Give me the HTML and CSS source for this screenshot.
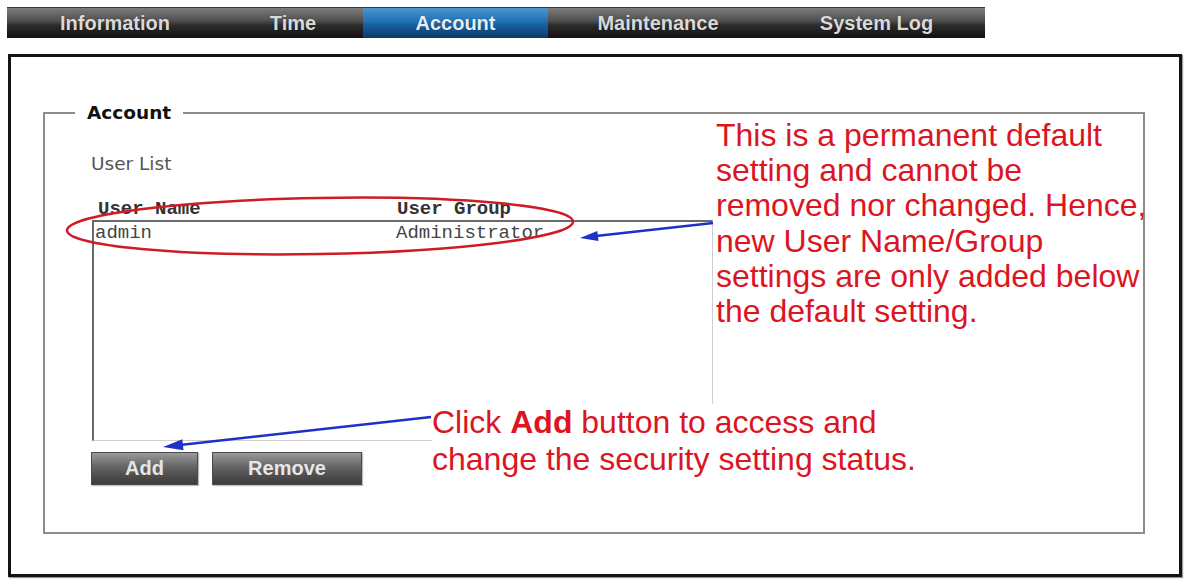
FILE: index.html
```html
<!DOCTYPE html>
<html lang="en">
<head>
<meta charset="utf-8">
<title>Account</title>
<link rel="stylesheet" href="styles.css">
</head>
<body>
<div class="page">
  <nav class="nav">
    <a class="tab tab-info">Information</a>
    <a class="tab tab-time">Time</a>
    <a class="tab tab-account active">Account</a>
    <a class="tab tab-maint">Maintenance</a>
    <a class="tab tab-log">System Log</a>
  </nav>

  <main class="box">
    <fieldset class="group">
      <legend class="group-title">Account</legend>
      <div class="label">User List</div>
      <div class="list-head">
        <span>User Name</span>
        <span>User Group</span>
      </div>
      <div class="listbox">
        <div class="row">
          <span>admin</span>
          <span>Administrator</span>
        </div>
      </div>
      <div class="actions">
        <button class="btn btn-add">Add</button>
        <button class="btn btn-remove">Remove</button>
      </div>
    </fieldset>
  </main>

  <p class="note note-default">This is a permanent default<br>setting and cannot be<br>removed nor changed. Hence,<br>new User Name/Group<br>settings are only added below<br>the default setting.</p>
  <p class="note note-add">Click <b>Add</b> button to access and<br>change the security setting status.</p>

  <svg class="marks" width="1184" height="581" viewBox="0 0 1184 581">
    <ellipse cx="320" cy="226" rx="253" ry="28" transform="rotate(-1 320 226)" fill="none" stroke="#cf1b24" stroke-width="2.5"/>
    <line x1="713" y1="223" x2="596" y2="236" stroke="#1f2fc8" stroke-width="2.5"/>
    <polygon points="580,238 598.5,240.9 597.3,231" fill="#1f2fc8"/>
    <line x1="431" y1="417" x2="180" y2="445" stroke="#1f2fc8" stroke-width="2.5"/>
    <polygon points="163,447 183.5,450.2 182.3,439.3" fill="#1f2fc8"/>
  </svg>
</div>
</body>
</html>
```

FILE: styles.css
```css
html, body {
  margin: 0;
  background: #fff;
}

.page {
  position: relative;
  width: 1184px;
  height: 581px;
  padding: 7px 0 0 7px;
  box-sizing: border-box;
  font-family: "DejaVu Sans", Verdana, sans-serif;
  overflow: hidden;
}

/* top tab bar */
.nav {
  display: flex;
  width: 978px;
  height: 31px;
  background: linear-gradient(#7c7c7c 0%, #505050 42%, #2c2c2c 58%, #111 100%);
  border-top: 1px solid #3a3a3a;
  box-sizing: border-box;
}

.tab {
  display: flex;
  align-items: center;
  justify-content: center;
  font-family: "Liberation Sans", Arial, sans-serif;
  font-weight: bold;
  font-size: 20px;
  color: #d9d9d9;
  text-shadow: 0 0 1px rgba(0, 0, 0, 0.6);
}

.tab-info { width: 216px; }
.tab-time { width: 140px; }
.tab-account { width: 185px; }
.tab-maint { width: 220px; }
.tab-log { width: 217px; }

.tab.active {
  background: linear-gradient(#4d95d2 0%, #2274b6 42%, #185f9d 58%, #0d3964 100%);
  color: #e4eef8;
}

/* outer frame */
.box {
  margin: 16px 0 0 1px;
  width: 1174px;
  height: 523px;
  border: 3px solid #141414;
  box-shadow: 1px 1px 1px #9a9a9a;
  box-sizing: border-box;
  padding: 45px 0 0 32px;
}

.group {
  margin: 0;
  width: 1102px;
  height: 432px;
  box-sizing: border-box;
  border: 2px solid #8c8c8c;
  padding: 29px 0 0 46px;
}

.group-title {
  margin-left: -16px;
  padding: 0 12px;
  font-weight: bold;
  font-size: 18.5px;
  line-height: 22px;
  color: #111;
}

.label {
  font-size: 18.5px;
  line-height: 22px;
  color: #555;
}

.list-head {
  display: grid;
  grid-template-columns: 299px auto;
  margin-top: 23px;
  padding-left: 7px;
  font-family: "Liberation Mono", "Courier New", monospace;
  font-weight: bold;
  font-size: 19px;
  line-height: 22px;
  color: #333;
}

.listbox {
  margin-left: 1px;
  width: 621px;
  height: 221px;
  box-sizing: border-box;
  border-top: 2px solid #6a6a6a;
  border-left: 2px solid #6a6a6a;
  border-right: 1px solid #cfcfcf;
  border-bottom: 1px solid #cfcfcf;
  padding-left: 1px;
}

.row {
  display: grid;
  grid-template-columns: 301px auto;
  font-family: "Liberation Mono", "Courier New", monospace;
  font-size: 19px;
  line-height: 22px;
  color: #444;
}

.actions {
  display: flex;
  gap: 14px;
  margin-top: 11px;
}

.btn {
  height: 33px;
  padding: 0;
  border: 1px solid #4a4a4a;
  background: linear-gradient(#9a9a9a 0%, #6a6a6a 40%, #505050 70%, #3c3c3c 100%);
  font-family: "Liberation Sans", Arial, sans-serif;
  font-weight: bold;
  font-size: 20px;
  color: #e6e6e6;
  box-shadow: 1px 1px 1px #bdbdbd;
}

.btn-add { width: 107px; }
.btn-remove { width: 150px; }

/* callout notes drawn over the form */
.note {
  position: absolute;
  margin: 0;
  font-family: "Liberation Sans", Arial, sans-serif;
  font-size: 32px;
  color: #db1522;
  white-space: nowrap;
}

.note-default {
  left: 716px;
  top: 118px;
  line-height: 35.2px;
}

.note-add {
  left: 432px;
  top: 404px;
  line-height: 36.6px;
  padding-right: 6px;
  background: #fff;
}

.marks {
  position: absolute;
  left: 0;
  top: 0;
  pointer-events: none;
}
```
